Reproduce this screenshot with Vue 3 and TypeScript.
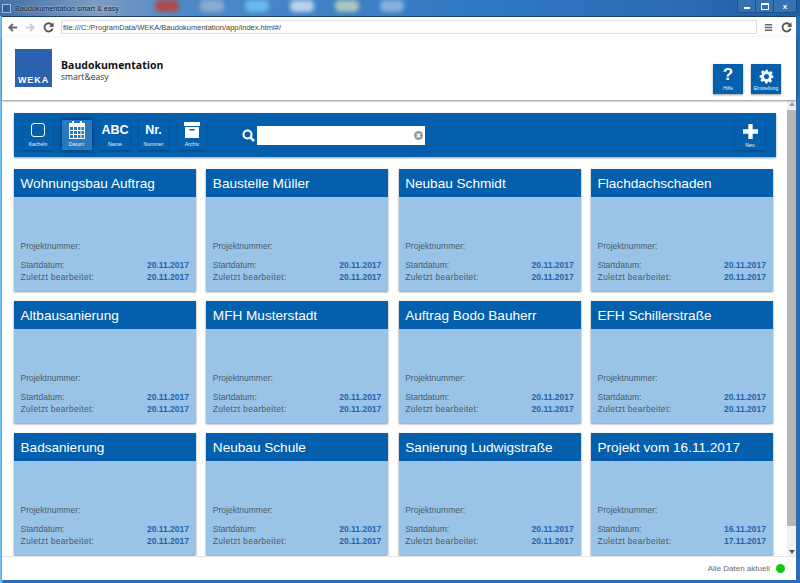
<script setup lang="ts">
interface Project { title: string; start: string; edit: string }
const d = '20.11.2017'
const names = ['Wohnungsbau Auftrag','Baustelle Müller','Neubau Schmidt','Flachdachschaden','Altbausanierung','MFH Musterstadt','Auftrag Bodo Bauherr','EFH Schillerstraße','Badsanierung','Neubau Schule','Sanierung Ludwigstraße']
const projects: Project[] = [
  ...names.map(title => ({ title, start: d, edit: d })),
  { title: 'Projekt vom 16.11.2017', start: '16.11.2017', edit: '17.11.2017' },
]
const blobs = ['#b9433f','#8fb0cf','#6cc0ee','#c4dcef','#b4d0bc','#8fb8dc']
</script>

<template>
  <div class="window">
    <div class="titlebar">
      <span class="appicon"></span>
      <span class="wintitle">Baudokumentation smart &amp; easy</span>
      <div class="blobs">
        <i v-for="(c, i) in blobs" :key="i" class="blob" :style="{ background: c }"></i>
      </div>
      <div class="controls">
        <span class="ctl"><b class="min"></b></span>
        <span class="ctl"><b class="max"></b></span>
        <span class="ctl close">x</span>
      </div>
    </div>
    <div class="browser">
      <div class="urlbar">
        <svg class="nav" viewBox="0 0 12 12"><path d="M11 6H3M6.500 2 2.500 6l4 4" fill="none" stroke="#666" stroke-width="2"/></svg>
        <svg class="nav" viewBox="0 0 12 12"><path d="M1 6h8M5.500 2l4 4-4 4" fill="none" stroke="#ccc" stroke-width="2"/></svg>
        <svg class="nav" viewBox="0 0 12 12"><path d="M10 3.500A4.500 4.500 0 1 0 10.500 7" fill="none" stroke="#555" stroke-width="2"/><path d="M11.500 0.500v5h-5z" fill="#555"/></svg>
        <div class="url">file:///C:/ProgramData/WEKA/Baudokumentation/app/index.html#/</div>
        <svg class="nav" viewBox="0 0 12 12"><path d="M2 3h8M2 6h8M2 9h8" stroke="#666" stroke-width="1.500"/></svg>
        <svg class="nav" viewBox="0 0 12 12"><path d="M10 3.500A4.500 4.500 0 1 0 10.500 7" fill="none" stroke="#555" stroke-width="2"/><path d="M11.500 0.500v5h-5z" fill="#555"/></svg>
      </div>
      <header class="header">
        <div class="logo"><span>WEKA</span></div>
        <div class="brand">
          <strong>Baudokumentation</strong>
          <span>smart&amp;easy</span>
        </div>
        <div class="headbtns">
          <button class="hbtn">
            <span class="qmark">?</span>
            <small>Hilfe</small>
          </button>
          <button class="hbtn">
            <svg class="gear" viewBox="0 0 24 24"><path fill="#fff" fill-rule="evenodd" d="M10 1h4l.6 3.100 1.900.8 2.600-1.800 2.800 2.800-1.800 2.600.8 1.900L23 10v4l-3.100.6-.8 1.900 1.800 2.600-2.800 2.800-2.600-1.800-1.900.8L14 23h-4l-.6-3.100-1.900-.8-2.600 1.800-2.800-2.800 1.800-2.600-.8-1.900L1 14v-4l3.100-.6.8-1.900-1.800-2.600 2.800-2.800 2.600 1.800 1.900-.8zM12 8a4 4 0 1 0 0 8 4 4 0 0 0 0-8z"/></svg>
            <small>Einstellung</small>
          </button>
        </div>
      </header>
      <div class="main">
        <div class="content">
          <div class="toolbar">
            <div class="tools">
              <button class="tool">
                <span class="ticon"><span class="square"></span></span>
                <small>Kacheln</small>
              </button>
              <button class="tool active">
                <span class="ticon">
                  <svg width="16" height="18" viewBox="0 0 16 18"><path fill="#fff" fill-rule="evenodd" d="M0 2h3V0h2v2h6V0h2v2h3v16H0zM1 6v3h3V6zm4 0v3h3V6zm4 0v3h2.500V6zm3.500 0v3H15V6zM1 10v3h3v-3zm4 0v3h3v-3zm4 0v3h2.500v-3zm3.500 0v3H15v-3zM1 14v3h3v-3zm4 0v3h3v-3zm4 0v3h2.500v-3zm3.500 0v3H15v-3z"/></svg>
                </span>
                <small>Datum</small>
              </button>
              <button class="tool">
                <span class="ticon big">ABC</span>
                <small>Name</small>
              </button>
              <button class="tool">
                <span class="ticon big">Nr.</span>
                <small>Nummer</small>
              </button>
              <button class="tool">
                <span class="ticon">
                  <svg width="16" height="16" viewBox="0 0 16 16"><path fill="#fff" fill-rule="evenodd" d="M0 0h16v4H0zM1 5h14v11H1zM5.500 7v1.500h5V7z"/></svg>
                </span>
                <small>Archiv</small>
              </button>
            </div>
            <div class="search">
              <svg width="13" height="13" viewBox="0 0 13 13"><circle cx="5.500" cy="5.500" r="4" fill="none" stroke="#fff" stroke-width="2.200"/><path d="M8.500 8.500l3.500 3.500" stroke="#fff" stroke-width="2.500"/></svg>
              <div class="field">
                <svg width="9" height="9" viewBox="0 0 9 9"><circle cx="4.500" cy="4.500" r="4.500" fill="#999"/><path d="M2.800 2.800l3.400 3.400M6.200 2.800L2.800 6.200" stroke="#fff" stroke-width="1.300"/></svg>
              </div>
            </div>
            <button class="tool neu">
              <svg width="15" height="15" viewBox="0 0 14 14"><path fill="#fff" d="M5 0h4v5h5v4H9v5H5V9H0V5h5z"/></svg>
              <small>Neu</small>
            </button>
          </div>
          <div class="grid">
            <article v-for="p in projects" :key="p.title" class="card">
              <h2>{{ p.title }}</h2>
              <div class="body">
                <div class="label pn">Projektnummer:</div>
                <div class="row"><span class="label">Startdatum:</span><b>{{ p.start }}</b></div>
                <div class="row"><span class="label wide">Zuletzt bearbeitet:</span><b>{{ p.edit }}</b></div>
              </div>
            </article>
          </div>
        </div>
        <div class="scrollbar">
          <span class="arrow up"></span>
          <span class="thumb"></span>
          <span class="arrow down"></span>
        </div>
      </div>
      <footer class="status">
        <span>Alle Daten aktuell</span>
        <i class="dot"></i>
      </footer>
    </div>
  </div>
</template>

<style>
html, body { margin: 0; padding: 0; background: #2a6fb8; }
</style>

<style scoped>
.window {
  width: 800px; height: 583px; overflow: hidden; display: flex; flex-direction: column;
  background: linear-gradient(90deg, #7fd0f5 0, #4d9fdc 2px, #2a6cb5 4px);
  font-family: "Liberation Sans", Arial, sans-serif; color: #555;
}
.titlebar {
  height: 16px; flex: none; display: flex; align-items: center; position: relative;
  background: linear-gradient(90deg, #3f6fa8 0%, #7f9cc0 12%, #4f8ac8 22%, #2f78c2 60%, #2a6cb5 85%, #1f5da6 100%);
  overflow: hidden;
}
.appicon { width: 9px; height: 9px; margin-left: 2px; background: #2f5f9f; border: 1px solid #9fc0e0; box-sizing: border-box; flex: none; }
.wintitle { font-size: 7.200px; color: #0c1c30; margin-left: 4px; white-space: nowrap; text-shadow: 0 0 3px #d5e6f7; width: 120px; flex: none; }
.blobs { display: flex; gap: 21px; margin-left: 20px; filter: blur(2px); }
.blob { display: block; width: 24px; height: 12px; border-radius: 5px; margin-top: -4px; opacity: .9; }
.controls { margin-left: auto; margin-right: 3px; margin-top: -3px; display: flex; height: 12px; border: 1px solid #1b4f8d; border-top: 0; border-radius: 0 0 3px 3px; background: #3672b2; }
.ctl { width: 17px; display: flex; align-items: center; justify-content: center; color: #fff; font: bold 8px "Liberation Sans", sans-serif; border-right: 1px solid #1b4f8d; }
.ctl.close { width: 22px; border: 0; }
.min { width: 6px; height: 2px; background: #fff; margin-top: 3px; }
.max { width: 6px; height: 4px; border: 1px solid #fff; border-top-width: 2px; }

.browser { flex: 1; min-height: 0; margin: 0 4px 3px 2px; background: #fff; display: flex; flex-direction: column; border-top: 1px solid #1c3f6a; }
.urlbar { height: 20px; flex: none; display: flex; align-items: center; padding: 0 4px 0 5px; gap: 7px; box-sizing: border-box; }
.nav { width: 11px; height: 11px; flex: none; }
.url { flex: 1; height: 14px; margin-right: -1px; border: 1px solid #ddd; font-size: 7.500px; line-height: 13px; padding-left: 1px; color: #444; white-space: nowrap; box-sizing: border-box; }

.header { height: 63px; flex: none; display: flex; align-items: center; padding: 0 15px 0 13px; box-shadow: 0 1px 2px rgba(0,0,0,.45); position: relative; z-index: 2; background: #fff; box-sizing: border-box; }
.logo { width: 37px; height: 38px; background: #2a62b0; display: flex; align-items: flex-end; justify-content: center; margin-top: -1px; }
.logo span { color: #fff; font: bold 9px "Liberation Sans", sans-serif; letter-spacing: .9px; margin-bottom: 2px; }
.brand { margin-left: 9px; display: flex; flex-direction: column; margin-top: 4px; color: #111; font-family: "Open Sans", sans-serif; }
.brand strong { font-size: 10.500px; line-height: 14px; font-weight: 700; }
.brand span { font-size: 8.600px; line-height: 11px; color: #333; }
.headbtns { margin-left: auto; display: flex; gap: 8px; margin-top: 18px; margin-bottom: -2px; }
.hbtn { width: 30px; height: 30px; padding: 0; border: 0; background: #045fac; box-shadow: 0 1px 2px rgba(0,0,0,.4); display: flex; flex-direction: column; align-items: center; color: #fff; }
.qmark { font: bold 17px/20px "Liberation Sans", sans-serif; height: 20px; margin-top: 1px; }
.gear { width: 15px; height: 15px; margin: 5px 0 1px; }
.hbtn small { font: 5px/6px "Liberation Sans", sans-serif; color: #dff; }

.main { flex: 1; min-height: 0; display: flex; }
.content { flex: 1; min-width: 0; overflow: hidden; padding: 13px 11px 0 12px; background: #fff; }
.toolbar { height: 44px; background: #045fac; box-shadow: 0 1px 2px rgba(0,0,0,.4); display: flex; align-items: center; padding: 0 9px; box-sizing: border-box; }
.tools { display: flex; gap: 8.500px; margin-top: -1px; }
.tool { width: 30px; height: 30px; padding: 0; border: 0; background: #045fac; box-shadow: 0 1px 2px rgba(0,40,90,.45); display: flex; flex-direction: column; align-items: center; color: #fff; }
.tool.active { background: #2a78bd; box-shadow: 0 0 5px rgba(0,30,70,.7); }
.tool small { font: 5.200px/6px "Liberation Sans", sans-serif; color: #e8f2fa; margin-top: 1px; white-space: nowrap; }
.ticon { height: 20px; display: flex; align-items: center; justify-content: center; margin-top: 0; }
.ticon.big { font: bold 12.500px/20px "Liberation Sans", sans-serif; }
.square { width: 14px; height: 14px; border: 1.500px solid #fff; border-radius: 3px; box-sizing: border-box; }
.search { display: flex; align-items: center; gap: 2px; margin-left: 35px; margin-top: 1px; }
.field { width: 168px; height: 19px; background: #fff; display: flex; align-items: center; justify-content: flex-end; padding-right: 2px; box-sizing: border-box; }
.neu { margin-left: auto; margin-right: 2px; padding-top: 4px; box-sizing: border-box; }
.neu small { margin-top: 3px; }

.grid { display: grid; grid-template-columns: repeat(4, 182px); column-gap: 10.330px; row-gap: 10px; margin-top: 12px; }
.card { height: 122px; background: #99c4e8; box-shadow: 0 1px 2px rgba(0,0,0,.45); display: flex; flex-direction: column; }
.card h2 { margin: 0; height: 28px; flex: none; background: #045fac; color: #fff; font: 13.600px/29px "Liberation Sans", sans-serif; font-weight: 400; padding-left: 6.500px; white-space: nowrap; }
.body { flex: 1; padding: 0 7px 0 6.500px; font-size: 8.500px; display: flex; flex-direction: column; }
.label { color: #4a5a68; }
.wide { letter-spacing: .3px; }
.pn { margin-top: 44px; line-height: 10px; margin-bottom: 8px; }
.row { display: flex; justify-content: space-between; line-height: 12px; }
.row b { color: #1f63ad; font-weight: 700; }

.scrollbar { width: 9px; flex: none; background: #f1f1f1; display: flex; flex-direction: column; align-items: center; }
.arrow { width: 0; height: 0; border: 3px solid transparent; margin: 2px 0; flex: none; }
.arrow.up { border-bottom: 4px solid #999; border-top: 0; }
.arrow.down { border-top: 4px solid #555; border-bottom: 0; margin-top: auto; }
.thumb { width: 9px; height: 416px; background: #b6b6b6; margin-top: 2px; }

.status { height: 24px; flex: none; display: flex; align-items: center; justify-content: flex-end; padding-right: 11px; gap: 6px; font-size: 8px; color: #6a6a6a; background: #fff; position: relative; z-index: 2; border-top: 1px solid #e4e4e4; box-sizing: border-box; }
.dot { width: 9px; height: 9px; border-radius: 50%; background: #13c613; }
</style>
